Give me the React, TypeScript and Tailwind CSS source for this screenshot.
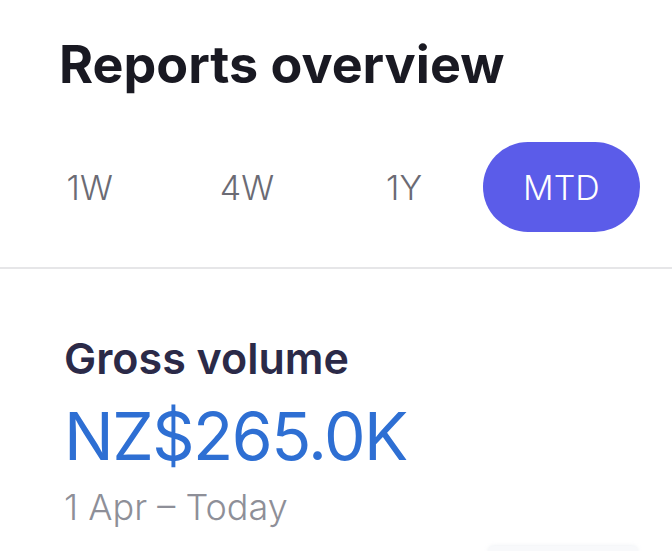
export default function App() {
  return (
    <div className="w-[672px] h-[551px] bg-white overflow-hidden relative" style={{ fontFamily: "Inter, 'Noto Sans', sans-serif" }}>
      <div className="pl-[59px] pt-[33px]">
        <h1 className="text-[52px] leading-[64px] font-bold text-[#191922]">Reports overview</h1>
      </div>
      <div className="ml-[11px] w-[629px] grid grid-cols-4 mt-[45px] h-[90px]">
        <span className="flex items-center justify-center text-[34px] font-light text-[#6b6b74]">1W</span>
        <span className="flex items-center justify-center text-[34px] font-light text-[#6b6b74]">4W</span>
        <span className="flex items-center justify-center text-[34px] font-light text-[#6b6b74]">1Y</span>
        <span className="rounded-full bg-[#5b5ce9] flex items-center justify-center text-[34px] font-light text-white">MTD</span>
      </div>
      <div className="mt-[35px] h-[2px] bg-[#e6e6e8]" />
      <div className="pl-[64px] pt-[63px]">
        <div className="text-[43px] leading-[52px] font-semibold text-[#2b2a48]">Gross volume</div>
        <div className="mt-[16px] text-[66px] leading-[72px] font-normal tracking-[-1.5px] text-[#2e6fd3]">NZ$265.0K</div>
        <div className="mt-[13px] text-[36px] leading-[44px] font-light text-[#8e8f98]">1 Apr – Today</div>
      </div>
      <div className="absolute left-[488px] top-[546px] w-[150px] h-[6px] rounded-t-[6px] bg-[#f8f9fb] shadow-[0_0_4px_rgba(200,210,220,0.4)]" />
    </div>
  );
}
